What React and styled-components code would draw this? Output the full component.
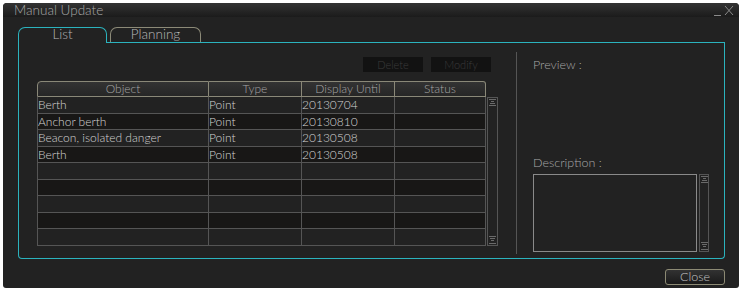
import React from 'react';
import styled, { createGlobalStyle } from 'styled-components';

const teal = '#2bb3be';

const GlobalStyle = createGlobalStyle`
  body {
    margin: 0;
    background: #ffffff;
    font-family: Lato, "Liberation Sans", sans-serif;
    font-weight: 300;
  }
`;

const Window = styled.div`
  width: 736px;
  height: 285px;
  margin: 3px;
  background: #222222;
  border-radius: 4px 4px 3px 3px;
  display: flex;
  flex-direction: column;
  overflow: hidden;
`;

const TitleBar = styled.div`
  height: 14px;
  display: flex;
  align-items: center;
  justify-content: space-between;
  padding: 0 4px 0 11px;
  background: linear-gradient(#333333, #1b1b1b);
  color: #a9a9a9;
  font-size: 13.5px;
  line-height: 14px;
`;

const Content = styled.div`
  padding: 10px 14px 0 15px;
  display: flex;
  flex-direction: column;
`;

const TabRow = styled.div`
  display: flex;
  height: 16px;
`;

const TabRest = styled.div`
  flex: 1;
  display: flex;
  align-items: flex-end;
  padding-left: 3px;
  border-bottom: 1px solid ${teal};
`;

const Tab = styled.div`
  box-sizing: border-box;
  width: ${p => p.$w}px;
  height: ${p => (p.$active ? 16 : 15)}px;
  border: 1px solid ${p => (p.$active ? teal : '#8c8a78')};
  border-bottom: none;
  border-radius: 7px 7px 0 0;
  color: #b8b8b8;
  font-size: 13.5px;
  line-height: 13px;
  text-align: center;
`;

const Panel = styled.div`
  box-sizing: border-box;
  height: 216px;
  border: 1px solid ${teal};
  border-top: none;
  border-radius: 0 0 4px 4px;
  display: flex;
`;

const LeftCol = styled.div`
  width: 461px;
  padding: 14px 0 0 18px;
  display: flex;
  flex-direction: column;
`;

const ButtonRow = styled.div`
  display: flex;
  justify-content: flex-end;
  gap: 8px;
  padding-right: 7px;
`;

const DimButton = styled.div`
  width: 60px;
  height: 15px;
  background: #121212;
  color: #3b3b3b;
  font-size: 11px;
  line-height: 15px;
  text-align: center;
`;

const Table = styled.div`
  margin-top: 9px;
  display: flex;
  flex-direction: column;
`;

const HeaderRow = styled.div`
  display: flex;
  height: 16px;
`;

const HeadCell = styled.div`
  box-sizing: border-box;
  width: ${p => p.$w}px;
  border: 1px solid #8a8878;
  border-left-width: ${p => (p.$first ? 1 : 0)}px;
  border-radius: ${p => (p.$first ? '4px 0 0 0' : p.$last ? '0 3px 0 0' : '0')};
  background: linear-gradient(#333333, #262626);
  color: #a6a6a6;
  font-size: 12px;
  line-height: 14px;
  text-align: center;
`;

const BodyWrap = styled.div`
  display: flex;
`;

const Grid = styled.div`
  width: 449px;
  border-left: 1px solid #555555;
  box-sizing: border-box;
`;

const Row = styled.div`
  box-sizing: border-box;
  display: flex;
  height: 16.5px;
  border-bottom: 1px solid #555555;
  background: ${p => (p.$dark ? '#181716' : '#222222')};
`;

const Cell = styled.div`
  box-sizing: border-box;
  width: ${p => p.$w - (p.$first ? 1 : 0)}px;
  border-right: 1px solid #555555;
  padding-left: 0;
  color: #d4d4d4;
  font-size: 12px;
  line-height: 15px;
  white-space: nowrap;
  overflow: hidden;
`;

const ScrollBar = styled.div`
  box-sizing: border-box;
  width: ${p => p.$w}px;
  margin-left: ${p => p.$gap}px;
  border: 1px solid #555555;
  display: flex;
  flex-direction: column;
  justify-content: space-between;
  align-items: center;
  padding: 1px 0;
`;

const Divider = styled.div`
  width: 1px;
  margin: 9px 0 4px 18px;
  background: #555555;
`;

const RightCol = styled.div`
  flex: 1;
  padding: 15px 0 0 16px;
  display: flex;
  flex-direction: column;
`;

const Label = styled.div`
  color: #a8a8a8;
  font-size: 12.5px;
  line-height: 14px;
  margin-top: ${p => p.$mt || 0}px;
`;

const DescRow = styled.div`
  display: flex;
  height: 78px;
  margin-top: 4px;
`;

const DescBox = styled.div`
  box-sizing: border-box;
  width: 164px;
  border: 1px solid #8a8a8a;
`;

const Footer = styled.div`
  display: flex;
  justify-content: flex-end;
  margin-top: 10px;
`;

const CloseButton = styled.div`
  box-sizing: border-box;
  width: 60px;
  height: 16px;
  border: 1px solid #8c8a74;
  border-radius: 3px;
  background: linear-gradient(#323232, #1a1a1a);
  color: #c4c4c4;
  font-size: 12.5px;
  line-height: 14px;
  text-align: center;
`;

const ArrowUp = () => (
  <svg width="9" height="8" viewBox="0 0 9 8">
    <g fill="#6a6a6a">
      <rect x="1" y="0" width="7" height="1" />
      <rect x="3" y="2" width="3" height="1" />
      <rect x="2" y="4" width="5" height="1" />
      <rect x="1" y="6" width="7" height="1" />
    </g>
  </svg>
);

const ArrowDown = () => (
  <svg width="9" height="8" viewBox="0 0 9 8">
    <g fill="#6a6a6a">
      <rect x="1" y="0" width="7" height="1" />
      <rect x="2" y="2" width="5" height="1" />
      <rect x="3" y="4" width="3" height="1" />
      <rect x="1" y="7" width="7" height="1" />
    </g>
  </svg>
);

const WindowControls = () => (
  <svg width="22" height="11" viewBox="0 0 22 11">
    <g stroke="#8a8a8a" strokeWidth="1" fill="none">
      <line x1="1" y1="10.5" x2="8" y2="10.5" />
      <line x1="12" y1="1" x2="20" y2="10" />
      <line x1="20" y1="1" x2="12" y2="10" />
    </g>
  </svg>
);

const columns = [
  { key: 'object', label: 'Object', w: 172 },
  { key: 'type', label: 'Type', w: 93 },
  { key: 'until', label: 'Display Until', w: 93 },
  { key: 'status', label: 'Status', w: 91 },
];

const rows = [
  { object: 'Berth', type: 'Point', until: '20130704', status: '' },
  { object: 'Anchor berth', type: 'Point', until: '20130810', status: '' },
  { object: 'Beacon, isolated danger', type: 'Point', until: '20130508', status: '' },
  { object: 'Berth', type: 'Point', until: '20130508', status: '' },
  {}, {}, {}, {}, {},
];

const App = () => {
  return (
    <>
      <GlobalStyle />
      <Window>
        <TitleBar>
          <span>Manual Update</span>
          <WindowControls />
        </TitleBar>
        <Content>
          <TabRow>
            <Tab $active $w={89}>List</Tab>
            <TabRest>
              <Tab $w={91}>Planning</Tab>
            </TabRest>
          </TabRow>
          <Panel>
            <LeftCol>
              <ButtonRow>
                <DimButton>Delete</DimButton>
                <DimButton>Modify</DimButton>
              </ButtonRow>
              <Table>
                <HeaderRow>
                  {columns.map((c, i) => (
                    <HeadCell key={c.key} $w={c.w} $first={i === 0} $last={i === columns.length - 1}>
                      {c.label}
                    </HeadCell>
                  ))}
                </HeaderRow>
                <BodyWrap>
                  <Grid>
                    {rows.map((r, i) => (
                      <Row key={i} $dark={i % 2 === 1}>
                        {columns.map((c, j) => (
                          <Cell key={c.key} $w={c.w} $first={j === 0}>{r[c.key]}</Cell>
                        ))}
                      </Row>
                    ))}
                  </Grid>
                  <ScrollBar $w={11} $gap={1}>
                    <ArrowUp />
                    <ArrowDown />
                  </ScrollBar>
                </BodyWrap>
              </Table>
            </LeftCol>
            <Divider />
            <RightCol>
              <Label>Preview :</Label>
              <Label $mt={84}>Description :</Label>
              <DescRow>
                <DescBox />
                <ScrollBar $w={10} $gap={2}>
                  <ArrowUp />
                  <ArrowDown />
                </ScrollBar>
              </DescRow>
            </RightCol>
          </Panel>
          <Footer>
            <CloseButton>Close</CloseButton>
          </Footer>
        </Content>
      </Window>
    </>
  );
};

export default App;
